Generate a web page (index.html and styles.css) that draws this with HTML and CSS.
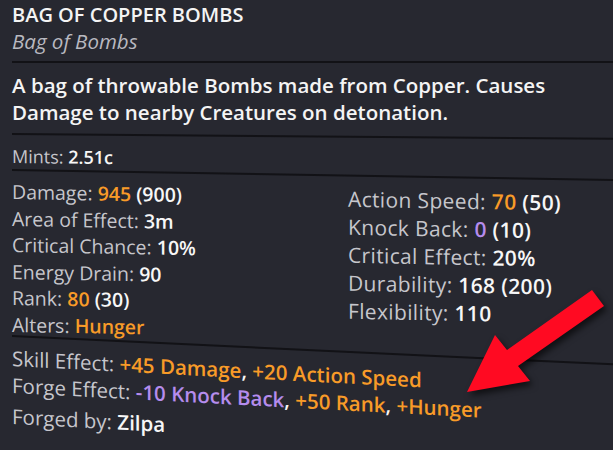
FILE: index.html
```html
<!DOCTYPE html>
<html>
<head>
<meta charset="utf-8">
<link rel="stylesheet" href="styles.css">
</head>
<body>
<div class="card">
  <section class="head">
    <div class="title">BAG OF COPPER BOMBS</div>
    <div class="subtitle">Bag of Bombs</div>
  </section>
  <hr class="rule r1">
  <section class="desc">A bag of throwable Bombs made from Copper. Causes Damage to nearby Creatures on detonation.</section>
  <hr class="rule r2">
  <section class="mints tilt-m"><span class="lbl">Mints:</span> <span class="val">2.51c</span></section>
  <hr class="rule r3">
  <section class="stats tilt-s">
    <div class="col left">
      <div class="row"><span class="lbl">Damage:</span> <span class="val orange">945</span> <span class="val">(900)</span></div>
      <div class="row"><span class="lbl">Area of Effect:</span> <span class="val">3m</span></div>
      <div class="row"><span class="lbl">Critical Chance:</span> <span class="val">10%</span></div>
      <div class="row"><span class="lbl">Energy Drain:</span> <span class="val">90</span></div>
      <div class="row"><span class="lbl">Rank:</span> <span class="val orange">80</span> <span class="val">(30)</span></div>
      <div class="row"><span class="lbl">Alters:</span> <span class="val orange">Hunger</span></div>
    </div>
    <div class="col right">
      <div class="row"><span class="lbl">Action Speed:</span> <span class="val orange">70</span> <span class="val">(50)</span></div>
      <div class="row"><span class="lbl">Knock Back:</span> <span class="val purple">0</span> <span class="val">(10)</span></div>
      <div class="row"><span class="lbl">Critical Effect:</span> <span class="val">20%</span></div>
      <div class="row"><span class="lbl">Durability:</span> <span class="val">168 (200)</span></div>
      <div class="row"><span class="lbl">Flexibility:</span> <span class="val">110</span></div>
    </div>
  </section>
  <hr class="rule r4">
  <section class="effects tilt-e">
    <div class="row"><span class="lbl">Skill Effect:</span> <span class="val orange">+45 Damage</span><span class="val">,</span> <span class="val orange">+20 Action Speed</span></div>
    <div class="row"><span class="lbl">Forge Effect:</span> <span class="val purple">-10 Knock Back</span><span class="val">,</span> <span class="val orange">+50 Rank</span><span class="val">,</span> <span class="val orange">+Hunger</span></div>
    <div class="row forged"><span class="lbl">Forged by:</span> <span class="val">Zilpa</span></div>
  </section>
</div>
<svg class="arrow" width="613" height="450" viewBox="0 0 613 450">
  <polygon points="592,290 507,350 495,335 467,392 530,381 518,366 604,306" fill="#ff0a22"/>
</svg>
</body>
</html>
```
FILE: styles.css
```css
html, body {
  margin: 0;
  padding: 0;
  background: #272830;
  width: 613px;
  height: 450px;
  overflow: hidden;
}
body {
  font-family: "Open Sans", Lato, sans-serif;
  color: #f2f2f2;
  position: relative;
}
.card {
  padding: 1px 0 0 12px;
}
.title {
  font-size: 20px;
  font-weight: 600;
  line-height: 27px;
  color: #f4f4f4;
}
.subtitle {
  font-size: 20.5px;
  font-style: italic;
  color: #b9b9c0;
  line-height: 27px;
}
.rule {
  border: 0;
  height: 2px;
  background: #121216;
  margin: 0;
  transform-origin: left center;
}
.r1 { margin-top: 6px; }
.r2 { transform: skewY(0.45deg); }
.r3 { transform: skewY(0.95deg); }
.r4 { transform: skewY(2.7deg); margin-top: -3px; }
.desc {
  font-size: 20.5px;
  font-weight: 600;
  line-height: 27px;
  padding: 9px 0 7px;
  color: #f4f4f4;
  width: 560px;
}
.mints {
  font-size: 18px;
  line-height: 24px;
  padding: 9px 0 1px;
}
.lbl {
  color: #c6c6cc;
  font-weight: 500;
}
.val {
  color: #f7f7f7;
  font-weight: 600;
}
.orange { color: #f89b28; }
.purple { color: #b58ced; }
.stats {
  display: flex;
  padding: 8px 0 0;
}
.col.left {
  width: 336px;
  flex-shrink: 0;
  font-size: 19.5px;
}
.col.left .row {
  line-height: 26.5px;
}
.col.right {
  flex: 1;
  font-size: 21px;
  letter-spacing: 0.35px;
  padding-top: 0;
  white-space: nowrap;
}
.right .row { line-height: 28px; }
.tilt-m { transform: skewY(0.6deg); transform-origin: left top; }
.tilt-s { transform: skewY(1deg); transform-origin: left top; }
.tilt-e { transform: skewY(3deg); transform-origin: left top; }
.effects {
  font-size: 20.5px;
  padding: 8px 0 0;
  white-space: nowrap;
}
.effects .row {
  line-height: 27px;
}
.effects .forged {
  margin-top: 4px;
}
.arrow {
  position: absolute;
  left: 0;
  top: 0;
  pointer-events: none;
  filter: drop-shadow(3px 4px 3px rgba(0,0,0,0.6));
}
```
